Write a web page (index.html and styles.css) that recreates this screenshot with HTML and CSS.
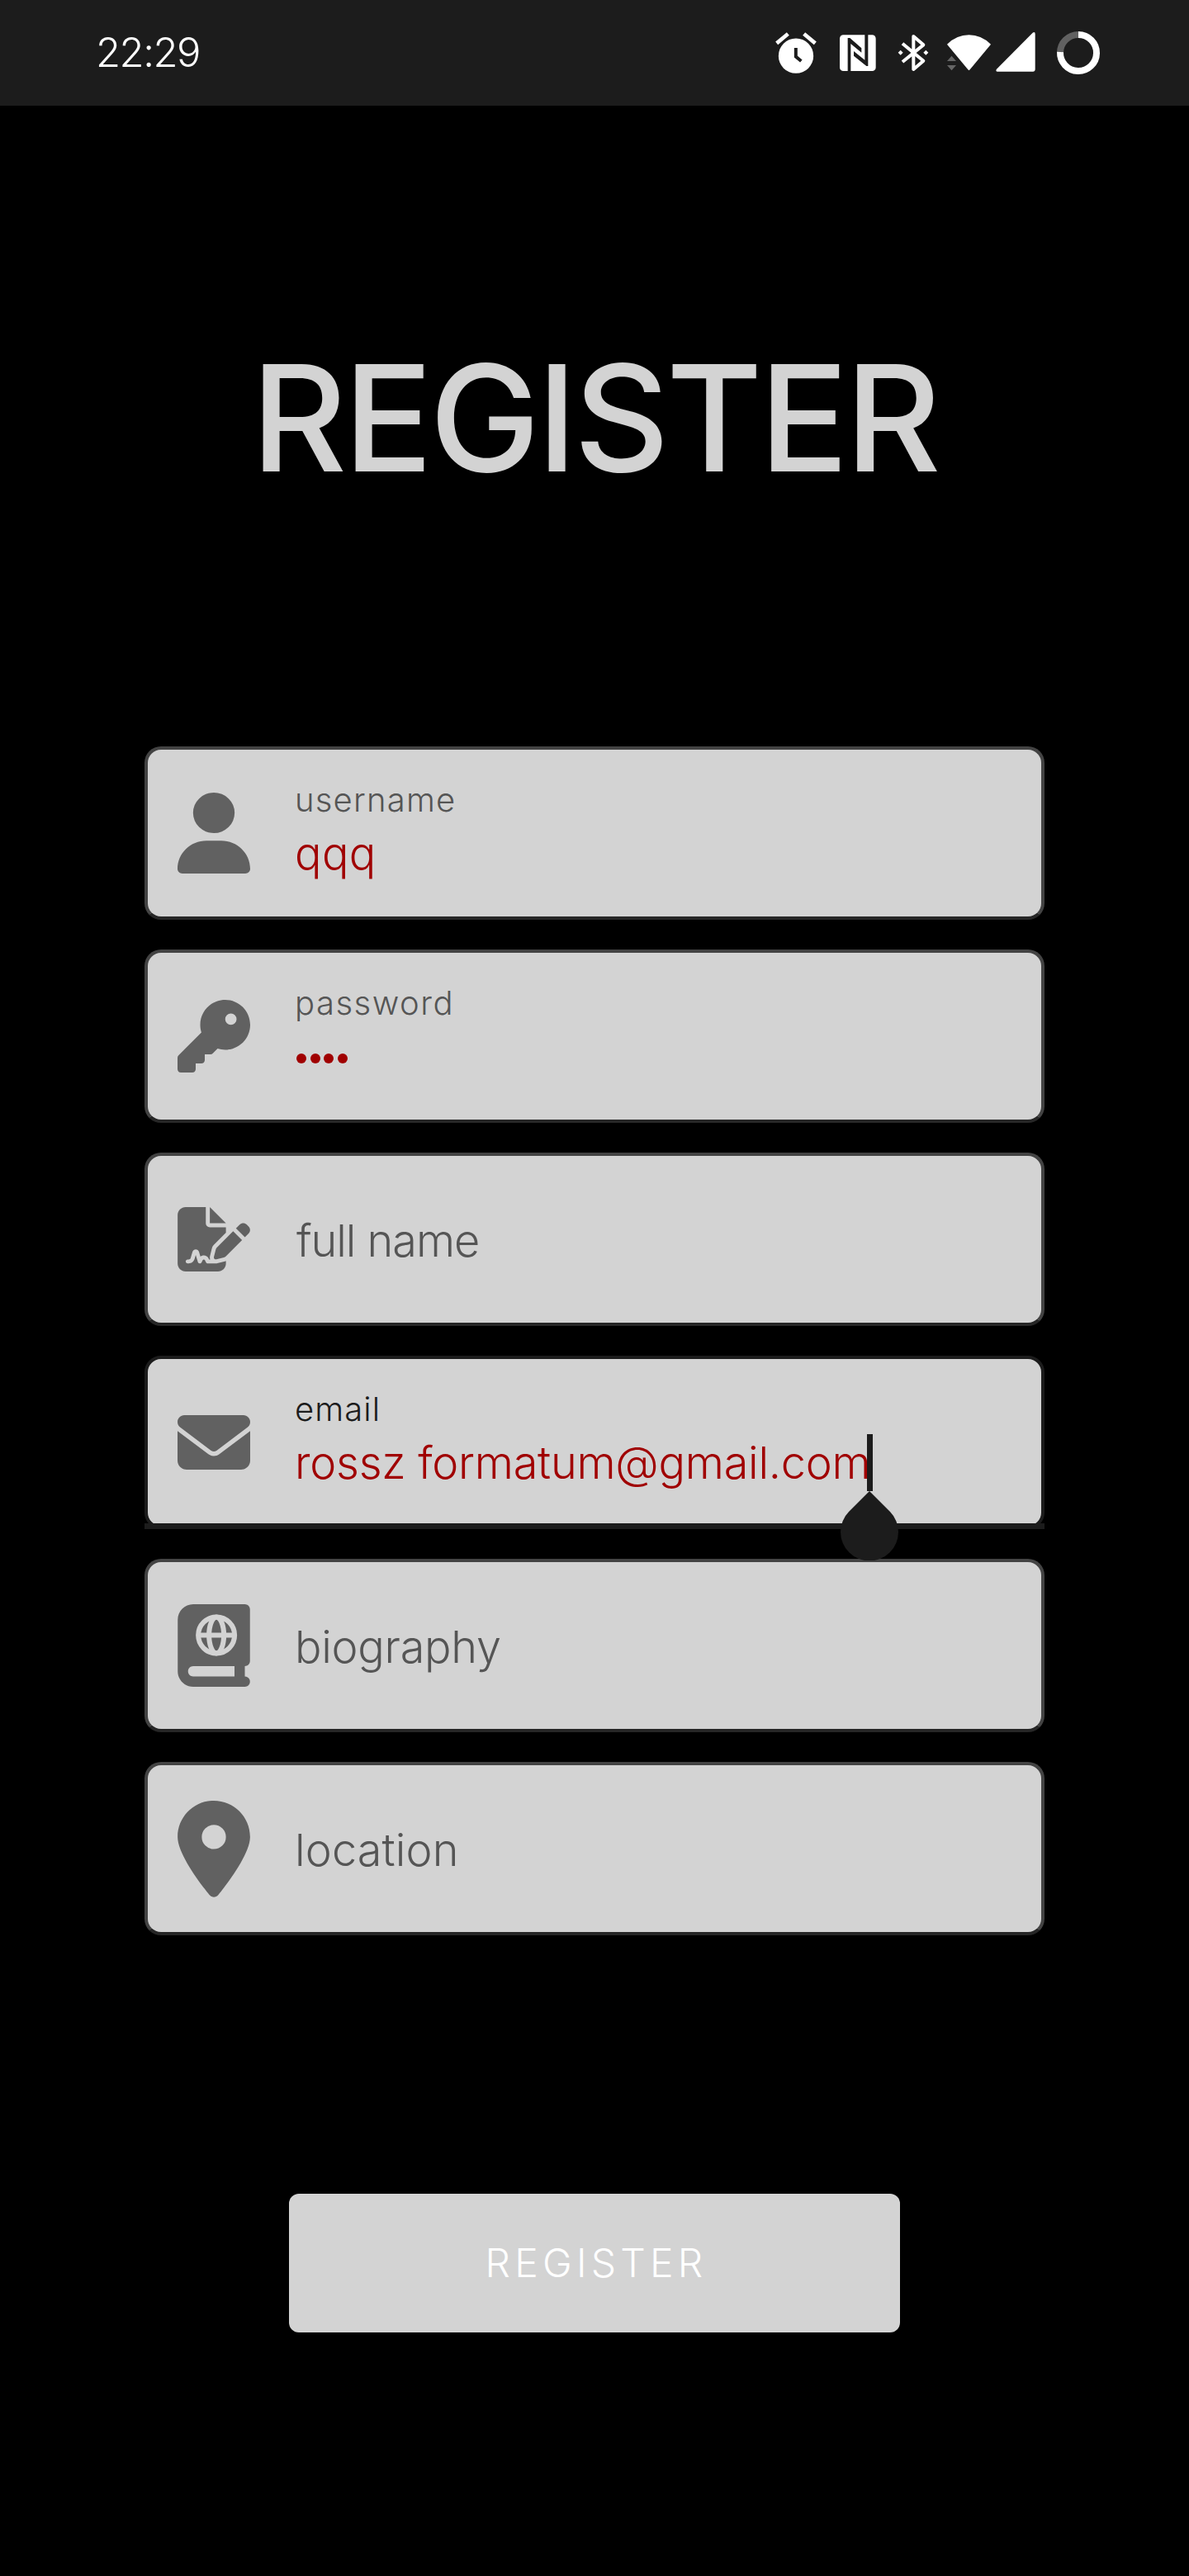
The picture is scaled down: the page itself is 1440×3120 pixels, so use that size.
FILE: index.html
```html
<!DOCTYPE html>
<html lang="en">
<head>
<meta charset="utf-8">
<title>Register</title>
<link rel="stylesheet" href="styles.css">
</head>
<body>
<header class="status">
  <span class="clock">22:29</span>
  <div class="tray">
    <svg class="alarm" viewBox="54 48 156 168"><circle cx="132" cy="143" r="63.500" fill="#fff"/><path d="M62 97L103 63M161 63L202 97" stroke="#fff" stroke-width="14"/><path d="M131.500 114V146L151 162" fill="none" stroke="#1c1c1c" stroke-width="12"/></svg>
    <svg class="nfc" viewBox="288 48 138 168"><rect x="291" y="67" width="131" height="131" rx="13" fill="#fff"/><path fill="#1c1c1c" d="M320 199V78h8l42 37v16l-39-32v100zM394 66V180h-6l-46-37v-17l40 32V66z"/></svg>
    <svg class="bt" viewBox="501 48 114 168"><path d="M519 98L595 161L559 192V72L595 103L519 165" fill="none" stroke="#fff" stroke-width="12" stroke-linejoin="round"/><path fill="#fff" d="M503 131l9-9 9 9-9 9zM595 131l9-9 9 9-9 9z"/></svg>
    <svg class="wifi" viewBox="48 48 165 168"><path fill="#fff" d="M51 101Q86 67 130.500 67T210 101L134 193Q130.500 198 127 193z"/><path fill="#666" d="M51 162h33l-16.500-19zM51 177h33l-16.500 19z"/></svg>
    <svg class="signal" viewBox="225 48 150 168"><path fill="#fff" d="M231 191L362 59Q371 54 371 63V193Q371 200 364 200H234Q226 199 231 191z"/></svg>
    <svg class="ring" viewBox="447 48 162 168"><g fill="none" stroke-width="24"><path stroke="#616161" d="M462 132A66 66 0 0 1 528 66"/><path stroke="#fff" d="M528 66A66 66 0 1 1 462.100 129"/></g></svg>
  </div>
</header>
<main class="screen">
  <h1 class="title">REGISTER</h1>
  <form class="form">
    <div class="field">
      <svg class="icon user" viewBox="0 0 448 512" preserveAspectRatio="none"><path d="M224 256A128 128 0 1 0 224 0a128 128 0 1 0 0 256zm-45.700 48C79.800 304 0 383.800 0 482.300C0 498.700 13.300 512 29.700 512H418.300c16.400 0 29.700-13.300 29.700-29.700C448 383.800 368.200 304 269.700 304H178.300z"/></svg>
      <div class="text"><span class="label l-user">username</span><span class="value v-user">qqq</span></div>
    </div>
    <div class="field">
      <svg class="icon key" viewBox="0 0 512 512"><path d="M336 352c97.200 0 176-78.800 176-176S433.200 0 336 0S160 78.800 160 176c0 18.700 2.900 36.800 8.300 53.700L7 391c-4.500 4.500-7 10.600-7 17v80c0 13.300 10.700 24 24 24h80c13.300 0 24-10.700 24-24V448h40c13.300 0 24-10.700 24-24V384h40c6.400 0 12.500-2.500 17-7l33.300-33.300c16.900 5.400 35 8.300 53.700 8.300zM376 96a40 40 0 1 1 0 80 40 40 0 1 1 0-80z"/></svg>
      <div class="text"><span class="label l-pass">password</span><span class="dots"><i></i><i></i><i></i><i></i></span></div>
    </div>
    <div class="field">
      <svg class="icon sign" viewBox="0 0 576 512"><path d="M64 0C28.700 0 0 28.700 0 64V448c0 35.300 28.700 64 64 64H320c35.300 0 64-28.700 64-64V428.700c-2.700 1.100-5.400 2-8.200 2.700l-60.100 15c-3 .7-6 1.200-9 1.400c-.9 .1-1.800 .2-2.700 .2H240c-6.100 0-11.600-3.400-14.300-8.800l-8.800-17.700c-1.700-3.400-5.100-5.500-8.800-5.500s-7.200 2.100-8.800 5.500l-8.800 17.700c-2.900 5.900-9.200 9.400-15.700 8.800s-12.100-5.100-13.900-11.300L144 381l-9.800 32.800c-6.100 20.300-24.800 34.200-46 34.200H80c-8.800 0-16-7.200-16-16s7.200-16 16-16h8.200c7.100 0 13.300-4.600 15.300-11.400l14.900-49.500c3.400-11.300 13.800-19.100 25.600-19.100s22.200 7.700 25.600 19.100l11.600 38.600c7.400-6.200 16.800-9.700 26.800-9.700c15.900 0 30.400 9 37.500 23.200l4.400 8.800h8.900c-3.100-8.800-3.700-18.400-1.400-27.800l15-60.100c2.800-11.300 8.600-21.500 16.800-29.700L384 203.600V160H256c-17.700 0-32-14.300-32-32V0H64zM256 0V128H384L256 0zM549.800 139.700c-15.600-15.600-40.900-15.600-56.600 0l-29.400 29.400 71 71 29.400-29.400c15.600-15.600 15.600-40.900 0-56.600l-14.400-14.400zM311.900 321c-4.100 4.100-7 9.200-8.400 14.900l-15 60.100c-1.400 5.500 .2 11.200 4.200 15.200s9.700 5.600 15.200 4.200l60.100-15c5.600-1.400 10.800-4.300 14.900-8.400L512.100 262.700l-71-71L311.900 321z"/></svg>
      <span class="placeholder p-name">full name</span>
    </div>
    <div class="field focused">
      <svg class="icon mail" viewBox="0 64 512 384"><path d="M48 64C21.500 64 0 85.500 0 112c0 15.100 7.100 29.300 19.200 38.400L236.800 313.600c11.400 8.500 27 8.500 38.400 0L492.800 150.400c12.100-9.100 19.200-23.300 19.200-38.400c0-26.500-21.500-48-48-48H48zM0 176V384c0 35.300 28.700 64 64 64H448c35.300 0 64-28.700 64-64V176L294.400 339.200c-22.800 17.100-54 17.100-76.800 0L0 176z"/></svg>
      <div class="text"><span class="label l-mail">email</span><span class="value v-mail">rossz formatum@gmail.com</span></div>
      <span class="caret"></span>
      <svg class="handle" viewBox="0 0 70 84"><path d="M35 0L60 25A35 35 0 1 1 10 25z"/></svg>
    </div>
    <div class="field">
      <svg class="icon book" viewBox="0 0 448 512"><path d="M0 96C0 43 43 0 96 0H416c17.700 0 32 14.300 32 32V352c0 17.700-14.300 32-32 32v64c17.700 0 32 14.300 32 32s-14.300 32-32 32H96c-53 0-96-43-96-96V96zM64 416c0 17.700 14.300 32 32 32H352V384H96c-17.700 0-32 14.300-32 32z"/><g fill="none" stroke="#d3d3d3" stroke-width="31"><circle cx="240" cy="192" r="112.500"/><ellipse cx="240" cy="192" rx="46" ry="112"/><path d="M128 192H352"/></g></svg>
      <span class="placeholder p-bio">biography</span>
    </div>
    <div class="field">
      <svg class="icon pin" viewBox="0 0 384 512"><path d="M215.700 499.200C267 435 384 279.400 384 192C384 86 298 0 192 0S0 86 0 192c0 87.400 117 243 168.300 307.200c12.300 15.300 35.100 15.300 47.400 0zM192 128a64 64 0 1 1 0 128 64 64 0 1 1 0-128z"/></svg>
      <span class="placeholder p-loc">location</span>
    </div>
    <button class="submit" type="button">REGISTER</button>
  </form>
</main>
</body>
</html>
```
FILE: styles.css
```css
* { box-sizing: border-box; }
body { margin: 0; background: #000; font-family: Inter, "Liberation Sans", sans-serif; font-weight: 300; }
.status { display: flex; justify-content: space-between; height: 128px; padding: 36px 107px 0 116px; background: #1c1c1c; color: #fff; }
.clock { font-size: 49px; line-height: 56px; letter-spacing: -1.5px; }
.tray { display: flex; height: 56px; }
.tray svg { height: 56px; display: block; }
.alarm { width: 52px; margin-right: 26px; }
.nfc { width: 46px; margin-right: 25px; }
.bt { width: 38px; margin-right: 21px; }
.wifi { width: 55px; margin-right: 4px; }
.signal { width: 50px; margin-right: 24px; }
.ring { width: 54px; }
.screen { display: flex; flex-direction: column; align-items: center; min-height: 2992px; }
.title { margin: 278px 0 0; height: 200px; font-size: 179px; line-height: 200px; font-weight: 500; letter-spacing: -3.9px; color: #d3d3d3; white-space: nowrap; }
.form { display: flex; flex-direction: column; align-items: center; gap: 36px; width: 1090px; margin-top: 298px; }
.field { position: relative; display: flex; align-items: center; width: 1090px; height: 210px; padding: 0 36px; background: #d3d3d3; border: 4px solid #434343; border-bottom-color: #262626; border-radius: 20px; color: #555; }
.icon { display: block; width: 88px; margin-right: 54px; fill: #616161; flex: none; }
.user { height: 98px; }
.key { height: 88px; }
.sign { height: 78px; }
.mail { height: 66px; }
.book { height: 100px; }
.pin { height: 117px; }
.text { display: flex; flex-direction: column; gap: 5px; align-self: flex-start; margin-top: 36px; }
.label { font-size: 40px; line-height: 50px; }
.value { font-size: 54px; line-height: 70px; color: #a00000; white-space: nowrap; }
.placeholder { font-size: 54px; line-height: 70px; margin-top: 3px; }
.l-user { letter-spacing: 1.2px; }
.l-pass { letter-spacing: 1.5px; }
.l-mail { letter-spacing: 1.1px; }
.v-user { letter-spacing: 0.4px; }
.v-mail { letter-spacing: -0.25px; }
.p-name { letter-spacing: -1.05px; margin-left: 2px; }
.p-bio { letter-spacing: -0.28px; }
.p-loc { letter-spacing: 0.15px; }
.dots { display: flex; gap: 4.5px; height: 70px; padding: 4px 0 0 2px; align-items: center; }
.dots i { width: 12px; height: 12px; border-radius: 50%; background: #a00000; }
.focused { border-color: #1c1c1c; z-index: 1; }
.focused .label { color: #1c1c1c; }
.focused::after { content: ""; position: absolute; left: -4px; right: -4px; bottom: -4px; height: 7px; background: #1c1c1c; }
.caret { position: absolute; left: 871px; top: 91px; width: 7px; height: 69px; background: #1c1c1c; }
.handle { position: absolute; left: 839px; top: 160px; width: 70px; height: 84px; fill: #1c1c1c; z-index: 2; }
.submit { width: 740px; height: 168px; margin-top: 277px; border: 0; padding: 0 0 0 4px; border-radius: 12px; background: #d3d3d3; color: #fff; font: 300 48px/60px Inter, "Liberation Sans", sans-serif; letter-spacing: 5.2px; }
```
